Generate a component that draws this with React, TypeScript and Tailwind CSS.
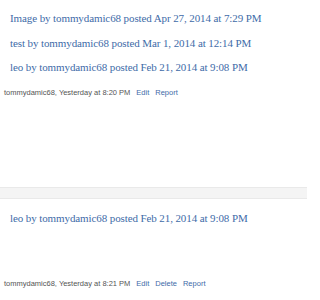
import React from 'react'

function PostLink({ title, date }: { title: string; date: string }) {
  return (
    <a
      href="#"
      className="block text-[11px] leading-[24.5px] tracking-[-0.1px] text-[#3e6ba8] whitespace-nowrap font-['Liberation_Serif','DejaVu_Serif',serif]"
    >
      {title} by tommydamic68 posted {date}
    </a>
  )
}

function Meta({ time, canDelete }: { time: string; canDelete?: boolean }) {
  return (
    <div className="flex items-center gap-[6px] text-[7.5px] whitespace-nowrap font-['Liberation_Sans',Arial,sans-serif]">
      <span className="text-[#555]">tommydamic68, Yesterday at {time}</span>
      <a href="#" className="text-[#3e6ba8]">Edit</a>
      {canDelete && <a href="#" className="text-[#3e6ba8]">Delete</a>}
      <a href="#" className="text-[#3e6ba8]">Report</a>
    </div>
  )
}

export default function App() {
  return (
    <div className="w-[307px] h-[300px] bg-white overflow-hidden">
      <div className="pl-[4px] pt-[6px]">
        <div className="pl-[6px]">
          <PostLink title="Image" date="Apr 27, 2014 at 7:29 PM" />
          <PostLink title="test" date="Mar 1, 2014 at 12:14 PM" />
          <PostLink title="leo" date="Feb 21, 2014 at 9:08 PM" />
        </div>
        <div className="mt-[7px]">
          <Meta time="8:20 PM" />
        </div>
      </div>
      <div className="mt-[89px] h-[12px] bg-[#f4f4f4] border-y border-[#e9e9e9]" />
      <div className="pl-[4px] pt-[7px]">
        <div className="pl-[6px]">
          <PostLink title="leo" date="Feb 21, 2014 at 9:08 PM" />
        </div>
        <div className="mt-[48px]">
          <Meta time="8:21 PM" canDelete />
        </div>
      </div>
    </div>
  )
}
